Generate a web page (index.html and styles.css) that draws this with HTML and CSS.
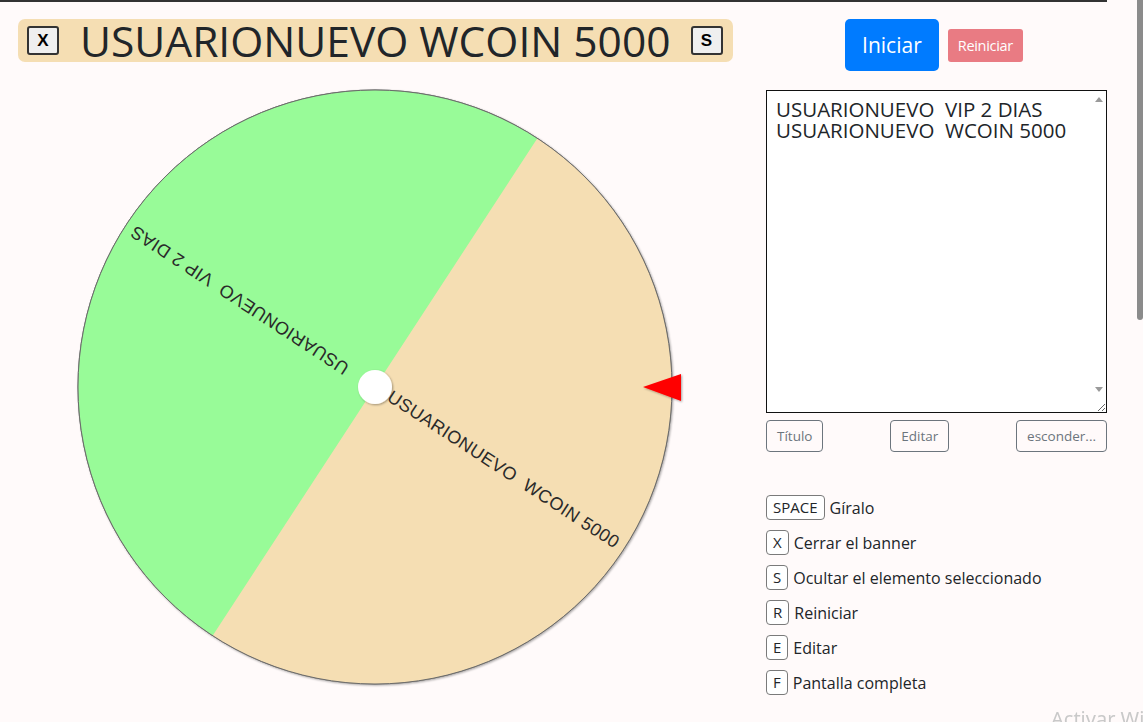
FILE: index.html
```html
<!DOCTYPE html>
<html lang="es">
<head>
    <meta charset="UTF-8">
    <meta name="viewport" content="width=device-width, initial-scale=1.0">
    <title>Ruleta</title>
    <link rel="stylesheet" href="styles.css">
</head>
<body>
    <div class="page">
        <main class="stage">
            <div class="banner">
                <button class="key-btn">X</button>
                <span class="banner-title">USUARIONUEVO WCOIN 5000</span>
                <button class="key-btn">S</button>
            </div>

            <!-- Ruleta: dos sectores, centro y flecha -->
            <svg class="wheel" width="616" height="610" viewBox="0 0 616 610">
                <defs>
                    <filter id="soft" x="-10%" y="-10%" width="120%" height="120%">
                        <feDropShadow dx="1" dy="1" stdDeviation="1" flood-color="#000" flood-opacity="0.35"/>
                    </filter>
                </defs>
                <g filter="url(#soft)">
                    <circle cx="305" cy="305" r="297" fill="#f5deb3" stroke="#6b6b6b" stroke-width="1"/>
                </g>
                <path d="M305 305 L467.4 56.3 A297 297 0 0 1 142.6 553.7 Z" fill="#f5deb3"/>
                <path d="M305 305 L142.6 553.7 A297 297 0 0 1 467.4 56.3 Z" fill="#98fb98"/>
                <circle cx="305" cy="305" r="297" fill="none" stroke="#6b6b6b" stroke-width="1"/>

                <g class="slice-label">
                    <text transform="translate(305 305) rotate(33.15)" x="289" y="0" text-anchor="end" dominant-baseline="middle">USUARIONUEVO&#160;&#160;WCOIN 5000</text>
                    <text transform="translate(305 305) rotate(213.15)" x="289" y="0" text-anchor="end" dominant-baseline="middle">USUARIONUEVO&#160;&#160;VIP 2 DIAS</text>
                </g>

                <circle cx="305" cy="305" r="17" fill="#fff" filter="url(#soft)"/>
                <polygon points="573,305 611,292 611,319" fill="#ff0000" filter="url(#soft)"/>
            </svg>
        </main>

        <aside class="panel">
            <div class="actions">
                <button class="btn btn-start">Iniciar</button>
                <button class="btn btn-reset">Reiniciar</button>
            </div>

            <div class="entries-box">
                <textarea class="entries" spellcheck="false">USUARIONUEVO  VIP 2 DIAS
USUARIONUEVO  WCOIN 5000</textarea>
                <span class="scroll-arrow up"></span>
                <span class="scroll-arrow down"></span>
            </div>

            <div class="entry-tools">
                <button class="btn-outline">Título</button>
                <button class="btn-outline">Editar</button>
                <button class="btn-outline">esconder...</button>
            </div>

            <ul class="shortcuts">
                <li><kbd>SPACE</kbd> Gíralo</li>
                <li><kbd>X</kbd> Cerrar el banner</li>
                <li><kbd>S</kbd> Ocultar el elemento seleccionado</li>
                <li><kbd>R</kbd> Reiniciar</li>
                <li><kbd>E</kbd> Editar</li>
                <li><kbd>F</kbd> Pantalla completa</li>
            </ul>
        </aside>
    </div>

    <div class="scroll-thumb"></div>
    <div class="activate-note">Activar Windows</div>
</body>
</html>
```

FILE: styles.css
```css
* {
    box-sizing: border-box;
}

body {
    margin: 0;
    background-color: #fffafa;
    color: #212529;
    font-family: "Open Sans", "Noto Sans", sans-serif;
    overflow: hidden;
}

.page {
    width: 1107px;
    height: 722px;
    border-top: 2px solid #333;
    padding: 17px 0 0 18px;
    display: grid;
    grid-template-columns: 748px 341px;
}

/* banner con el premio */
.banner {
    display: inline-flex;
    align-items: center;
    height: 43px;
    padding: 0 10px 0 9px;
    background-color: #f5deb3;
    border-radius: 7px;
}

.banner-title {
    font-size: 42.5px;
    line-height: 43px;
    margin: 0 20px 0 21px;
    color: #212529;
}

.key-btn {
    width: 32px;
    height: 29px;
    padding: 0;
    background: #efefef;
    border: 2px solid #333;
    border-radius: 3px;
    font-family: "Liberation Sans", Arial, sans-serif;
    font-size: 17px;
    font-weight: bold;
    color: #000;
}

.wheel {
    display: block;
    margin: 20px 0 0 52px;
}

.slice-label {
    font-family: "Liberation Sans", Arial, sans-serif;
    font-size: 18px;
    fill: #2a2a2a;
    letter-spacing: 0.4px;
}

/* panel derecho */
.panel {
    display: flex;
    flex-direction: column;
}

.actions {
    display: flex;
    justify-content: center;
    align-items: center;
    gap: 9px;
    padding-right: 5px;
}

.btn {
    border: none;
    color: #fff;
    font-family: inherit;
    cursor: pointer;
}

.btn-start {
    height: 52px;
    padding: 0 17px;
    font-size: 21px;
    background-color: #007bff;
    border-radius: 5px;
}

.btn-reset {
    height: 33px;
    padding: 0 10px;
    font-size: 14.5px;
    background-color: #e97b83;
    border-radius: 3px;
    letter-spacing: -0.3px;
}

.entries-box {
    position: relative;
    margin-top: 19px;
}

.entries {
    display: block;
    width: 341px;
    height: 323px;
    padding: 8px 24px 7px 9px;
    border: 1px solid #111;
    border-radius: 0;
    background: #fff;
    color: #212529;
    font-family: inherit;
    font-size: 20.5px;
    line-height: 20.5px;
    overflow-y: scroll;
    resize: vertical;
}

/* flechas de la barra del área de texto */
.scroll-arrow {
    position: absolute;
    right: 4px;
    width: 0;
    height: 0;
    border-left: 4.5px solid transparent;
    border-right: 4.5px solid transparent;
}

.scroll-arrow.up {
    top: 7px;
    border-bottom: 5px solid #9a9a9a;
}

.scroll-arrow.down {
    top: 297px;
    border-top: 5px solid #9a9a9a;
}

.entry-tools {
    display: flex;
    justify-content: space-between;
    margin-top: 7px;
}

.btn-outline {
    height: 32px;
    padding: 0 10px;
    background: transparent;
    border: 1px solid #6c757d;
    border-radius: 4px;
    color: #6c757d;
    font-family: inherit;
    font-size: 13.5px;
}

.shortcuts {
    list-style: none;
    margin: 43px 0 0;
    padding: 0;
    display: flex;
    flex-direction: column;
    gap: 10px;
    font-size: 16px;
}

.shortcuts li {
    display: flex;
    align-items: center;
    gap: 5px;
    height: 25px;
}

.shortcuts kbd {
    display: inline-block;
    height: 25px;
    min-width: 21px;
    padding: 0 6px;
    border: 1px solid #7a7a7a;
    border-radius: 4px;
    background: #fff;
    font-family: inherit;
    font-size: 15px;
    line-height: 23px;
    text-align: center;
}

/* barra de desplazamiento del navegador y aviso del sistema */
.scroll-thumb {
    position: fixed;
    top: 0;
    right: 0;
    width: 6px;
    height: 320px;
    background: #8b8b8b;
    border-radius: 0 0 3px 3px;
}

.activate-note {
    position: fixed;
    left: 1051px;
    top: 705px;
    font-family: "Noto Sans", sans-serif;
    font-size: 20px;
    color: #c9c9c9;
    white-space: nowrap;
}
```
